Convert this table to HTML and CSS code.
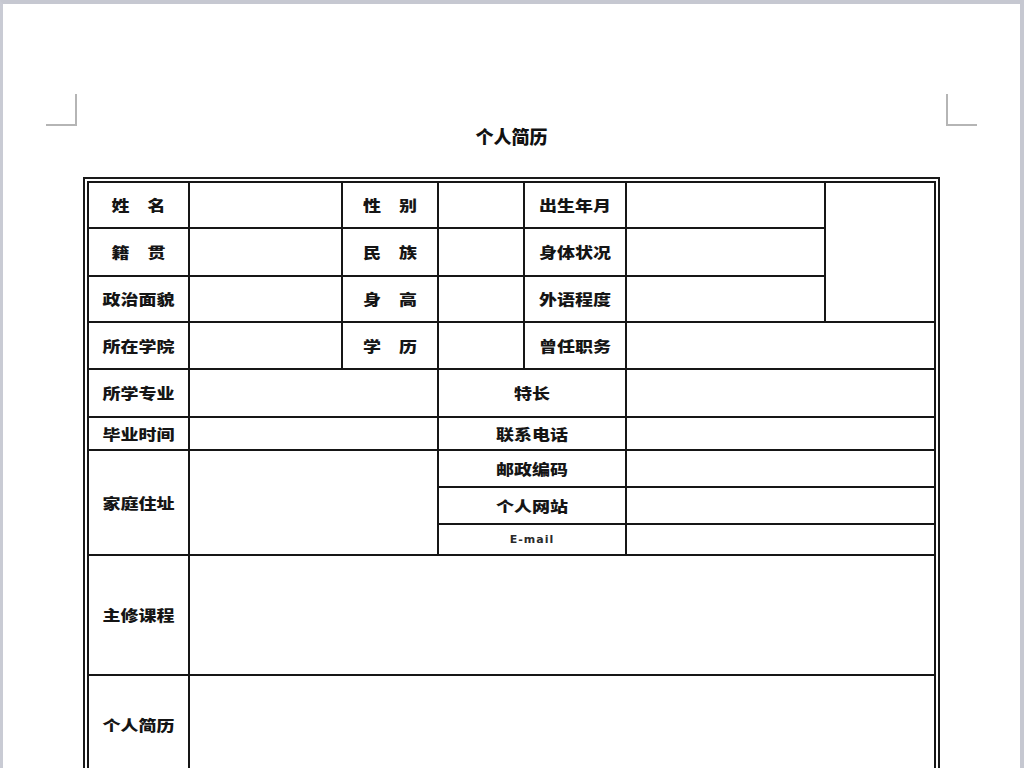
FILE: index.html
```html
<!DOCTYPE html>
<html lang="zh-CN">
<head>
<meta charset="utf-8">
<title>个人简历</title>
<link rel="stylesheet" href="styles.css">
</head>
<body>
<div class="page">
  <div class="marks">
    <div class="mark mark-left"></div>
    <div class="mark mark-right"></div>
  </div>
  <h1 class="title">个人简历</h1>
  <div class="frame">
    <table class="resume">
      <colgroup>
        <col class="c1"><col class="c2"><col class="c3"><col class="c4"><col class="c5"><col class="c6"><col class="c7">
      </colgroup>
      <tr class="r46">
        <td class="lbl"><span>姓　名</span></td>
        <td></td>
        <td class="lbl"><span>性　别</span></td>
        <td></td>
        <td class="lbl"><span>出生年月</span></td>
        <td></td>
        <td rowspan="3"></td>
      </tr>
      <tr class="r48">
        <td class="lbl"><span>籍　贯</span></td>
        <td></td>
        <td class="lbl"><span>民　族</span></td>
        <td></td>
        <td class="lbl"><span>身体状况</span></td>
        <td></td>
      </tr>
      <tr class="r46">
        <td class="lbl"><span>政治面貌</span></td>
        <td></td>
        <td class="lbl"><span>身　高</span></td>
        <td></td>
        <td class="lbl"><span>外语程度</span></td>
        <td></td>
      </tr>
      <tr class="r47">
        <td class="lbl"><span>所在学院</span></td>
        <td></td>
        <td class="lbl"><span>学　历</span></td>
        <td></td>
        <td class="lbl"><span>曾任职务</span></td>
        <td colspan="2"></td>
      </tr>
      <tr class="r48">
        <td class="lbl"><span>所学专业</span></td>
        <td colspan="2"></td>
        <td class="lbl" colspan="2"><span>特长</span></td>
        <td colspan="2"></td>
      </tr>
      <tr class="r33">
        <td class="lbl"><span>毕业时间</span></td>
        <td colspan="2"></td>
        <td class="lbl" colspan="2"><span>联系电话</span></td>
        <td colspan="2"></td>
      </tr>
      <tr class="r37">
        <td class="lbl" rowspan="3"><span>家庭住址</span></td>
        <td colspan="2" rowspan="3"></td>
        <td class="lbl" colspan="2"><span>邮政编码</span></td>
        <td colspan="2"></td>
      </tr>
      <tr class="r37">
        <td class="lbl" colspan="2"><span>个人网站</span></td>
        <td colspan="2"></td>
      </tr>
      <tr class="r31">
        <td class="lbl mail" colspan="2">E-mail</td>
        <td colspan="2"></td>
      </tr>
      <tr class="r120">
        <td class="lbl"><span>主修课程</span></td>
        <td colspan="6"></td>
      </tr>
      <tr class="r100">
        <td class="lbl"><span>个人简历</span></td>
        <td colspan="6"></td>
      </tr>
    </table>
  </div>
</div>
</body>
</html>
```

FILE: styles.css
```css
html, body {
  margin: 0;
  padding: 0;
  background: #ffffff;
}

.page {
  box-sizing: border-box;
  min-height: 100vh;
  background: #ffffff;
  border-top: 4px solid #c6c8d1;
  border-left: 3px solid #c9cbd4;
  border-right: 4px solid #c6c8d1;
  padding-bottom: 40px;
  font-family: "Noto Sans CJK SC", "Liberation Sans", sans-serif;
  color: #111;
}

.marks {
  display: flex;
  justify-content: space-between;
  padding: 90px 43px 0 43px;
}

.mark {
  width: 29px;
  height: 30px;
}

.mark-left {
  border-right: 2px solid #b5b5b5;
  border-bottom: 2px solid #b5b5b5;
}

.mark-right {
  border-left: 2px solid #b5b5b5;
  border-bottom: 2px solid #b5b5b5;
}

.title {
  margin: 0;
  height: 51px;
  font-size: 18px;
  line-height: 20px;
  font-weight: 900;
  text-align: center;
  color: #111;
}

.frame {
  margin: 0 80px;
  border: 2px solid #1a1a1a;
  padding: 2px;
}

.resume {
  width: 100%;
  table-layout: fixed;
  border-collapse: collapse;
}

.resume td {
  border: 2px solid #161616;
  padding: 0;
  text-align: center;
  vertical-align: middle;
}

.c1 { width: 101px; }
.c2 { width: 153px; }
.c3 { width: 96px; }
.c4 { width: 86px; }
.c5 { width: 102px; }
.c6 { width: 199px; }
.c7 { width: 110px; }

.r46 { height: 46px; }
.r48 { height: 48px; }
.r47 { height: 47px; }
.r33 { height: 33px; }
.r37 { height: 37px; }
.r31 { height: 31px; }
.r120 { height: 120px; }
.r100 { height: 100px; }

.lbl {
  font-size: 18px;
  font-weight: 900;
  line-height: 18px;
  white-space: nowrap;
  color: #151515;
}

.lbl span {
  display: inline-block;
  transform: scaleY(0.8);
}

.lbl.mail {
  font-family: "DejaVu Sans", "Liberation Sans", sans-serif;
  font-size: 11px;
  font-weight: 700;
  letter-spacing: 1px;
  color: #2a2a2a;
}
```
